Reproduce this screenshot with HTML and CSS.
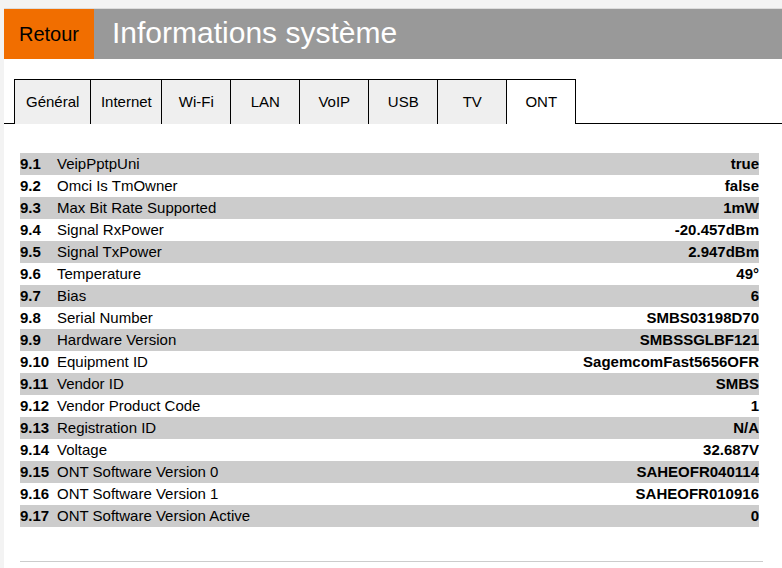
FILE: index.html
```html
<!DOCTYPE html>
<html lang="fr">
<head>
    <meta charset="UTF-8">
    <meta name="viewport" content="width=device-width, initial-scale=1.0">
    <title>Informations système</title>
    <link rel="stylesheet" href="styles.css">
</head>
<body>
    <div class="page">
        <div class="header">
            <a class="back" href="#">Retour</a>
            <h1 class="title">Informations système</h1>
        </div>

        <div class="tabs">
            <div class="tab wide">Général</div>
            <div class="tab">Internet</div>
            <div class="tab">Wi-Fi</div>
            <div class="tab">LAN</div>
            <div class="tab">VoIP</div>
            <div class="tab">USB</div>
            <div class="tab">TV</div>
            <div class="tab active">ONT</div>
        </div>

        <table class="info">
            <tr><td class="num">9.1</td><td>VeipPptpUni</td><td class="val">true</td></tr>
            <tr><td class="num">9.2</td><td>Omci Is TmOwner</td><td class="val">false</td></tr>
            <tr><td class="num">9.3</td><td>Max Bit Rate Supported</td><td class="val">1mW</td></tr>
            <tr><td class="num">9.4</td><td>Signal RxPower</td><td class="val">-20.457dBm</td></tr>
            <tr><td class="num">9.5</td><td>Signal TxPower</td><td class="val">2.947dBm</td></tr>
            <tr><td class="num">9.6</td><td>Temperature</td><td class="val">49°</td></tr>
            <tr><td class="num">9.7</td><td>Bias</td><td class="val">6</td></tr>
            <tr><td class="num">9.8</td><td>Serial Number</td><td class="val">SMBS03198D70</td></tr>
            <tr><td class="num">9.9</td><td>Hardware Version</td><td class="val">SMBSSGLBF121</td></tr>
            <tr><td class="num">9.10</td><td>Equipment ID</td><td class="val">SagemcomFast5656OFR</td></tr>
            <tr><td class="num">9.11</td><td>Vendor ID</td><td class="val">SMBS</td></tr>
            <tr><td class="num">9.12</td><td>Vendor Product Code</td><td class="val">1</td></tr>
            <tr><td class="num">9.13</td><td>Registration ID</td><td class="val">N/A</td></tr>
            <tr><td class="num">9.14</td><td>Voltage</td><td class="val">32.687V</td></tr>
            <tr><td class="num">9.15</td><td>ONT Software Version 0</td><td class="val">SAHEOFR040114</td></tr>
            <tr><td class="num">9.16</td><td>ONT Software Version 1</td><td class="val">SAHEOFR010916</td></tr>
            <tr><td class="num">9.17</td><td>ONT Software Version Active</td><td class="val">0</td></tr>
        </table>

        <div class="separator"></div>
    </div>
</body>
</html>
```

FILE: styles.css
```css
body {
    margin: 0;
    padding: 0;
    background: #f3f3f3;
    font-family: "Liberation Sans", Arial, sans-serif;
    color: #000;
}
.page {
    margin: 8px 0 0 4px;
    border-top: 1px solid #dcdcdc;
    background: #fff;
    min-height: calc(100vh - 9px);
    overflow: hidden;
}
.header {
    display: flex;
    height: 50px;
    background: #999999;
}
.back {
    width: 90px;
    background: #f16e00;
    color: #000;
    text-decoration: none;
    font-size: 20px;
    line-height: 50px;
    text-align: center;
}
.title {
    margin: 0;
    padding: 0 0 3px 18px;
    color: #fff;
    font-size: 30px;
    font-weight: normal;
    line-height: 47px;
}
.tabs {
    display: flex;
    margin-top: 20px;
}
.tabs::before,
.tabs::after {
    content: "";
    height: 44px;
    border-bottom: 1px solid #000;
}
.tabs::before {
    width: 10px;
}
.tabs::after {
    flex: 1;
}
.tab {
    min-width: 49px;
    height: 44px;
    padding: 0 9.5px;
    border-top: 1px solid #000;
    border-left: 1px solid #000;
    background: #efefef;
    font-size: 15px;
    line-height: 44px;
    text-align: center;
}
.tab.wide {
    padding: 0 11px;
}
.tab.active {
    background: #fff;
    border-right: 1px solid #000;
}
.info {
    width: 739px;
    margin: 29px 0 0 16px;
    border-collapse: collapse;
    font-size: 15px;
}
.info td {
    height: 22px;
    padding: 0;
    line-height: 22px;
    white-space: nowrap;
}
.info tr:nth-child(odd) {
    background: #cccccc;
}
.info .num {
    width: 37px;
    font-weight: bold;
}
.info .val {
    text-align: right;
    font-weight: bold;
}
.separator {
    width: 743px;
    margin: 34px 0 0 16px;
    border-top: 1px solid #cccccc;
}
```
